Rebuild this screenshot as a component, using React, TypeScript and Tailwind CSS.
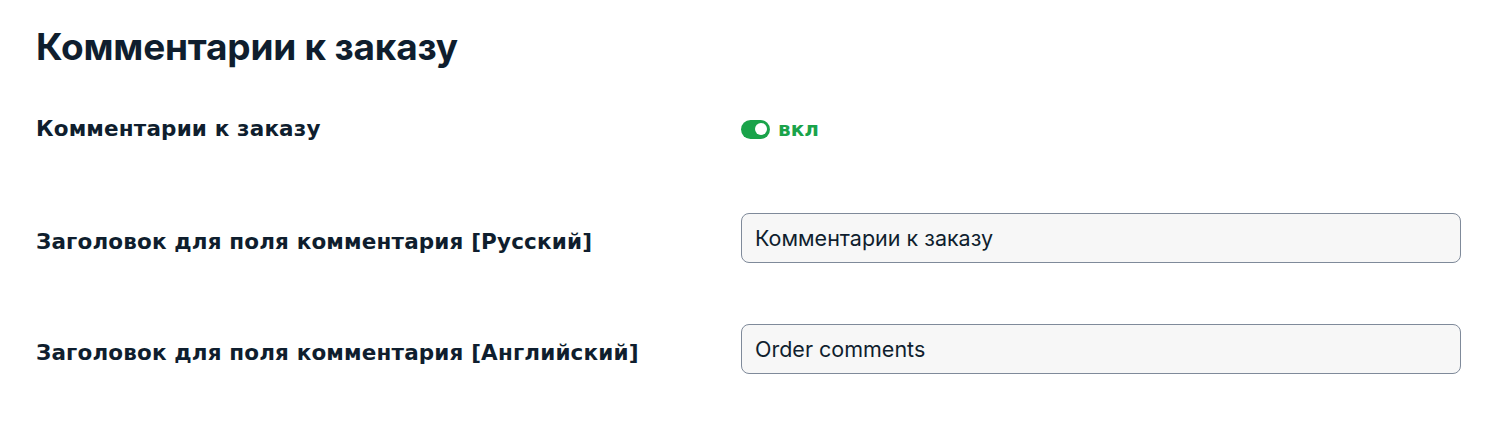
import React from "react";

const labelCls = "w-[705px] text-[21.5px] font-bold text-[#0f1e2e] tracking-[0.15px] pt-[9px]";
const inputCls = "flex-1 h-[50px] rounded-[8px] border border-[#7f8a9a] bg-[#f7f7f7] px-[13px] text-[21.5px] text-[#0f1e2e] outline-none";

export default function App() {
  return (
    <div className="w-[1496px] h-[438px] bg-white pl-[36px] pr-[35px] pt-[22px]" style={{ fontFamily: "Inter, 'Noto Sans', sans-serif" }}>
      <h1 className="text-[37px] leading-[50px] font-bold text-[#0f1e2e] tracking-[-0.2px]">Комментарии к заказу</h1>
      <div className="mt-[42px] flex items-center h-[30px]">
        <div className="w-[705px] text-[21.5px] font-bold text-[#0f1e2e] tracking-[0.15px]" style={{ fontFamily: "'DejaVu Sans', sans-serif" }}>Комментарии к заказу</div>
        <div className="flex items-center gap-[8px]">
          <div className="w-[29px] h-[19px] rounded-full bg-[#1aa34a] flex items-center justify-end pr-[3px]">
            <div className="w-[12px] h-[12px] rounded-full bg-white" />
          </div>
          <span className="text-[20px] font-bold text-[#1aa34a]" style={{ fontFamily: "'DejaVu Sans', sans-serif" }}>вкл</span>
        </div>
      </div>
      <div className="mt-[69px] flex items-center">
        <div className={labelCls} style={{ fontFamily: "'DejaVu Sans', sans-serif" }}>Заголовок для поля комментария [Русский]</div>
        <input readOnly value="Комментарии к заказу" className={inputCls} />
      </div>
      <div className="mt-[61px] flex items-center">
        <div className={labelCls} style={{ fontFamily: "'DejaVu Sans', sans-serif" }}>Заголовок для поля комментария [Английский]</div>
        <input readOnly value="Order comments" className={inputCls} />
      </div>
    </div>
  );
}
